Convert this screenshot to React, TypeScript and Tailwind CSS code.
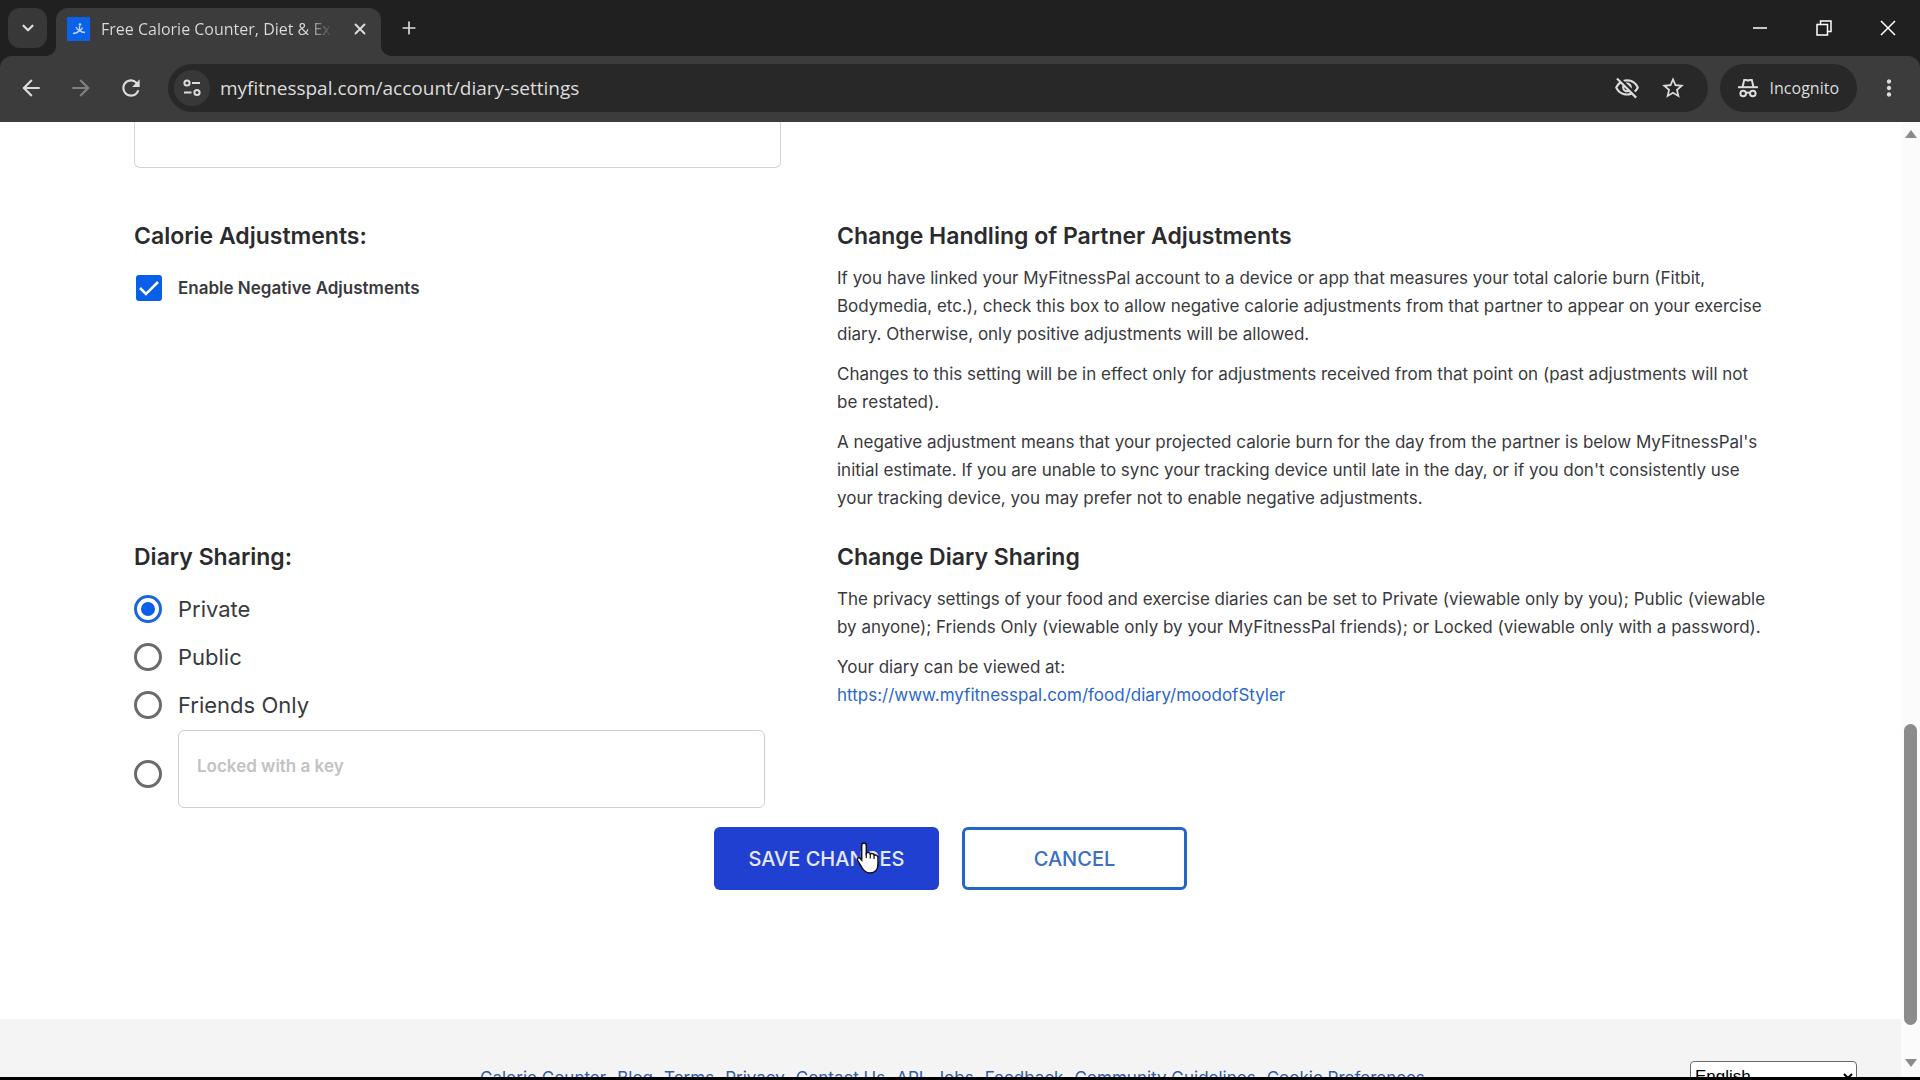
import { useState } from 'react';
import { ChevronDown, Plus, X } from 'lucide-react';
import { MdArrowBack, MdArrowForward, MdMoreVert, MdOutlineVisibilityOff, MdRefresh, MdStarBorder } from 'react-icons/md';

const sharingOptions = ['Private', 'Public', 'Friends Only'];

const footerLinks = [
  'Calorie Counter',
  'Blog',
  'Terms',
  'Privacy',
  'Contact Us',
  'API',
  'Jobs',
  'Feedback',
  'Community Guidelines',
  'Cookie Preferences',
];

const headingClass = 'text-[23px] leading-8 font-semibold text-[#2b2b2e]';

const radioClass =
  "grid size-7 shrink-0 appearance-none place-items-center rounded-full border-[3px] border-[#6b6b6e] bg-white checked:border-[#1a66de] checked:before:size-[14px] checked:before:rounded-full checked:before:bg-[#0a5fe8] checked:before:content-['']";

const SiteSettingsIcon = () => (
  <svg viewBox="0 0 18 18" className="size-[18px]" fill="none" stroke="currentColor" strokeWidth="2">
    <circle cx="4" cy="4" r="2.6" />
    <path d="M9 4h8M1 13.500h7.500" />
    <circle cx="14" cy="13.500" r="2.6" />
  </svg>
);

const IncognitoIcon = () => (
  <svg viewBox="0 0 20 20" className="size-5" fill="none" stroke="currentColor" strokeWidth="2">
    <path d="M0 9.200h20" />
    <path d="M4.500 9 6.200 2h2.300l1.500.7 1.500-.7h2.300l1.700 7" />
    <circle cx="5.200" cy="15.500" r="2.800" />
    <circle cx="14.800" cy="15.500" r="2.800" />
    <path d="M8 15.200c1.300-.8 2.700-.8 4 0" />
  </svg>
);

const Favicon = () => (
  <svg viewBox="0 0 24 24" className="size-6 shrink-0">
    <rect width="23" height="24" rx="1" fill="#0b62e8" />
    <circle cx="13" cy="7.500" r="1.300" fill="#bcd6ff" />
    <path d="M12.500 9v4.500M6 16.500c3 0 5-1.300 6.500-3 1.300 1.300 3 2 5.500 2M9 10c.8 2 2 3 3.500 3.500 1.200-.5 2.500-1.500 3-3" fill="none" stroke="#bcd6ff" strokeWidth="1.300" />
  </svg>
);

const HandCursor = () => (
  <svg viewBox="0 0 26 34" className="pointer-events-none absolute top-3.5 left-[141px] h-[34px] w-[26px]">
    <path
      d="M9 2c1.500 0 2.300 1 2.300 2.500V12c.6-1 3.600-.8 4 .9 1-.8 3.500-.3 3.800 1.300 1.500-.6 3.900.1 3.900 2.400V23c0 5.500-3 9-8 9-4.500 0-6.500-2.500-8.500-6l-4-6.500c-1-2 .8-3.500 2.500-2.300L6.700 19V4.500C6.700 3 7.500 2 9 2Z"
      fill="#fff"
      stroke="#111"
      strokeWidth="1.5"
    />
    <path d="M11.300 12v5M15.300 13v4.500M19.100 14.500V18" stroke="#111" strokeWidth="1.2" />
  </svg>
);

const BrowserChrome = () => (
  <header className="shrink-0 bg-[#202020] font-['Open_Sans',sans-serif] text-[#dcdcdc]">
    <div className="flex h-14 items-start pt-2">
      <button aria-label="Search tabs" className="ml-2 grid h-10 w-[39px] place-items-center rounded-xl bg-[#383838]">
        <ChevronDown size={18} strokeWidth={3} />
      </button>
      <div className="relative ml-[9px] flex h-12 w-[325px] items-center gap-2.5 rounded-t-xl bg-[#3c3c3c] pr-3 pb-1.5 pl-[11px]">
        <svg viewBox="0 0 10 10" className="absolute bottom-0 -left-2.5 size-2.5"><path d="M10 0v10H0A10 10 0 0 0 10 0Z" fill="#3c3c3c" /></svg>
        <svg viewBox="0 0 10 10" className="absolute -right-2.5 bottom-0 size-2.5"><path d="M0 0v10h10A10 10 0 0 1 0 0Z" fill="#3c3c3c" /></svg>
        <Favicon />
        <span className="min-w-0 flex-1 overflow-hidden bg-linear-to-r from-[#dcdcdc] from-88% to-transparent bg-clip-text text-base whitespace-nowrap text-transparent">
          Free Calorie Counter, Diet &amp; Exe
        </span>
        <button aria-label="Close tab" className="ml-2"><X size={18} strokeWidth={2.5} /></button>
      </div>
      <button aria-label="New tab" className="ml-[18px] pt-2.5"><Plus size={20} /></button>
      <div className="ml-auto flex h-10 items-center gap-11 pr-6 text-white">
        <button aria-label="Minimize">
          <svg viewBox="0 0 16 16" className="size-4" stroke="currentColor"><path d="M1 8h14" strokeWidth="1.5" /></svg>
        </button>
        <button aria-label="Restore">
          <svg viewBox="0 0 16 16" className="ml-1 size-4" fill="none" stroke="currentColor" strokeWidth="1.5">
            <path d="M1 4.500h10.500V15H1zM4.500 4.500V1H15v10.500h-3.500" />
          </svg>
        </button>
        <button aria-label="Close">
          <svg viewBox="0 0 16 16" className="ml-1 size-4" stroke="currentColor" strokeWidth="1.5"><path d="m1 1 14 14M15 1 1 15" /></svg>
        </button>
      </div>
    </div>
    <div className="flex h-[66px] items-center rounded-t-xl bg-[#3c3c3c] px-[18px] pb-0.5">
      <button aria-label="Back"><MdArrowBack size={26} /></button>
      <button aria-label="Forward" className="ml-6 text-[#808080]"><MdArrowForward size={26} /></button>
      <button aria-label="Reload" className="ml-6"><MdRefresh size={26} /></button>
      <div className="ml-6 flex h-12 flex-1 items-center rounded-full bg-[#282828] px-1.5">
        <button aria-label="View site information" className="grid size-9 place-items-center rounded-full bg-[#383838]"><SiteSettingsIcon /></button>
        <div className="ml-2.5 flex min-w-0 flex-1">
          <input
            aria-label="Address"
            className="min-w-0 flex-1 text-[19px] leading-7 outline-none"
            defaultValue="myfitnesspal.com/account/diary-settings"
          />
        </div>
        <button aria-label="Third-party cookies blocked"><MdOutlineVisibilityOff size={26} /></button>
        <button aria-label="Bookmark this tab" className="mr-4 ml-5"><MdStarBorder size={26} /></button>
      </div>
      <button className="ml-3 flex h-12 items-center gap-3 rounded-full bg-[#282828] px-[18px] text-base">
        <IncognitoIcon />
        Incognito
      </button>
      <button aria-label="Menu" className="ml-[19px]"><MdMoreVert size={26} /></button>
    </div>
  </header>
);

const Scrollbar = () => (
  <div aria-hidden="true" className="flex w-[19px] shrink-0 flex-col items-center bg-[#fbfbfb] pt-2 pb-2.5">
    <svg viewBox="0 0 12 8" className="h-2 w-3"><path d="M6 0l6 8H0z" fill="#8b8b8b" /></svg>
    <div className="grow-[587]" />
    <div className="w-[13px] grow-[301] rounded-full bg-[#8b8b8b]" />
    <div className="grow-[34]" />
    <svg viewBox="0 0 12 8" className="h-2 w-3"><path d="M0 0h12L6 8z" fill="#8b8b8b" /></svg>
  </div>
);

const App = () => {
  const [negative, setNegative] = useState(true);
  const [sharing, setSharing] = useState('Private');

  return (
    <div className="flex h-screen flex-col overflow-hidden border-b-[3px] border-black bg-white font-[Inter,sans-serif] text-[#3a3a3e]">
      <BrowserChrome />
      <div className="flex min-h-0 flex-1">
        <div className="flex min-w-0 flex-1 flex-col overflow-hidden">
          <main className="shrink-0 px-[134px] pb-[129px]">
            <form onSubmit={(e) => e.preventDefault()}>
              <textarea
                aria-label="Food diary settings"
                className="block h-[46px] w-[647px] resize-none rounded-b-md border border-t-0 border-[#d5d5d8] outline-none"
              />
              <div className="grid grid-cols-[647px_1fr] gap-x-14 pt-[52px]">
                <section>
                  <h2 className={headingClass}>Calorie Adjustments:</h2>
                  <label className="mt-[22px] flex items-center gap-4 text-[17px] leading-7 font-semibold">
                    <input
                      type="checkbox"
                      checked={negative}
                      onChange={(e) => setNegative(e.target.checked)}
                      className="peer sr-only"
                    />
                    <svg viewBox="0 0 26 26" className="ml-0.5 size-[26px] rounded-[3px] border-2 border-[#6b6b6e] peer-checked:border-0 peer-checked:bg-[#0a5fe8]">
                      <path d="m4 13 6 6L22 7" fill="none" stroke="#fff" strokeWidth="2.500" />
                    </svg>
                    Enable Negative Adjustments
                  </label>
                </section>
                <section>
                  <h2 className={headingClass}>Change Handling of Partner Adjustments</h2>
                  <div className="mt-3 space-y-3 text-[17px] leading-7">
                    <p>
                      If you have linked your MyFitnessPal account to a device or app that measures your total calorie
                      burn (Fitbit, Bodymedia, etc.), check this box to allow negative calorie adjustments from that
                      partner to appear on your exercise diary. Otherwise, only positive adjustments will be allowed.
                    </p>
                    <p>
                      Changes to this setting will be in effect only for adjustments received from that point on (past
                      adjustments will not be restated).
                    </p>
                    <p>
                      A negative adjustment means that your projected calorie burn for the day from the partner is below
                      MyFitnessPal's initial estimate. If you are unable to sync your tracking device until late in the
                      day, or if you don't consistently use your tracking device, you may prefer not to enable negative
                      adjustments.
                    </p>
                  </div>
                </section>
              </div>
              <div className="grid grid-cols-[647px_1fr] gap-x-14 pt-[29px]">
                <section>
                  <h2 className={headingClass}>Diary Sharing:</h2>
                  <div className="mt-5 flex flex-col gap-4 text-[22px] leading-8">
                    {sharingOptions.map((option) => (
                      <label key={option} className="flex items-center gap-4">
                        <input
                          type="radio"
                          name="sharing"
                          checked={sharing === option}
                          onChange={() => setSharing(option)}
                          className={radioClass}
                        />
                        {option}
                      </label>
                    ))}
                  </div>
                  <div className="mt-[9px] flex items-end gap-4 pr-4">
                    <input
                      type="radio"
                      name="sharing"
                      aria-label="Locked with a key"
                      checked={sharing === 'Locked'}
                      onChange={() => setSharing('Locked')}
                      className={`${radioClass} mb-5`}
                    />
                    <input
                      type="text"
                      aria-label="Diary key"
                      placeholder="Locked with a key"
                      className="h-[78px] min-w-0 flex-1 rounded-md border border-[#cfcfd3] px-[18px] pb-1.5 text-[17px] font-semibold outline-none placeholder:text-[#c2c2c4]"
                    />
                  </div>
                </section>
                <section>
                  <h2 className={headingClass}>Change Diary Sharing</h2>
                  <div className="mt-3 space-y-3 text-[17px] leading-7">
                    <p>
                      The privacy settings of your food and exercise diaries can be set to Private (viewable only by
                      you); Public (viewable by anyone); Friends Only (viewable only by your MyFitnessPal friends); or
                      Locked (viewable only with a password).
                    </p>
                    <p>
                      Your diary can be viewed at:
                      <br />
                      <a href="#diary" className="text-[#2b67c9]">https://www.myfitnesspal.com/food/diary/moodofStyler</a>
                    </p>
                  </div>
                </section>
              </div>
              <div className="mt-[19px] flex justify-center gap-[23px] text-xl font-medium">
                <div className="relative">
                  <button type="submit" className="h-[63px] w-[225px] rounded-md bg-[#2040d2] text-[#e6e9fb]">SAVE CHANGES</button>
                  <HandCursor />
                </div>
                <button type="button" className="h-[63px] w-[225px] rounded-md border-[3px] border-[#2366c4] text-[#3b6fc4]">CANCEL</button>
              </div>
            </form>
          </main>
          <footer className="flex shrink-0 items-start bg-[#f4f4f5] pt-[42px] pr-11 pb-10 pl-[480px]">
            <nav className="mt-[5px] flex gap-[11px] text-[17px] leading-6 whitespace-nowrap text-[#2f5da8]">
              {footerLinks.map((link) => (
                <a key={link} href="#footer">{link}</a>
              ))}
            </nav>
            <select aria-label="Language" className="ml-auto h-[30px] w-[167px] rounded-sm border border-[#6b6b6e] bg-white font-['Liberation_Sans',sans-serif] text-[17px] text-black">
              <option>English</option>
            </select>
          </footer>
        </div>
        <Scrollbar />
      </div>
    </div>
  );
};

export default App;
